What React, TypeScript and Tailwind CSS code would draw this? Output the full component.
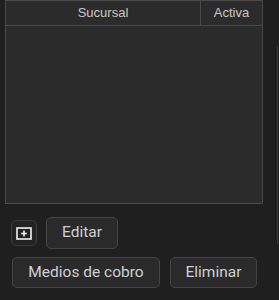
import React from "react";

const btn =
  "h-[31px] rounded-[5px] border border-[#444444] bg-[#2a2a2a] text-[15.5px] text-[#cdd1d6] font-['Roboto',sans-serif] font-normal leading-none";

const AddBoxIcon = () => (
  <svg width="16" height="13" viewBox="0 0 16 13" fill="none">
    <rect x="1" y="1" width="14" height="11" stroke="#f2f2f2" strokeWidth="1.6" />
    <path d="M8 3.6v5.8M5.1 6.5h5.8" stroke="#f2f2f2" strokeWidth="1.6" />
  </svg>
);

const App = () => {
  return (
    <div className="flex h-[300px] w-[279px] overflow-hidden bg-[#1f1f1f]">
      <div className="flex w-[277px] flex-col">
        <div className="ml-[5px] flex h-[204px] w-[258px] flex-col border border-t-0 border-[#4a4a4a] bg-[#2b2b2b] font-['Liberation_Sans',sans-serif]">
          <div className="flex h-[26px] border-y border-[#4a4a4a] text-[13px] text-[#c8c8c8]">
            <div className="flex flex-1 items-center justify-center border-r border-[#4a4a4a]">
              Sucursal
            </div>
            <div className="flex w-[61px] items-center justify-center">Activa</div>
          </div>
        </div>
        <div className="mt-[13px] flex items-center gap-[9px] pl-[11px]">
          <button className="flex h-[26px] w-[26px] items-center justify-center rounded-[5px] border border-[#3a3a3a] bg-[#232323]">
            <AddBoxIcon />
          </button>
          <button className={`${btn} h-[32px] w-[72px]`}>Editar</button>
        </div>
        <div className="mt-[8px] flex gap-[10px] pl-[12px]">
          <button className={`${btn} w-[148px]`}>Medios de cobro</button>
          <button className={`${btn} w-[87px]`}>Eliminar</button>
        </div>
      </div>
      <div className="mt-[46px] h-[198px] border-l border-[#3c3c3c]" />
    </div>
  );
};

export default App;
